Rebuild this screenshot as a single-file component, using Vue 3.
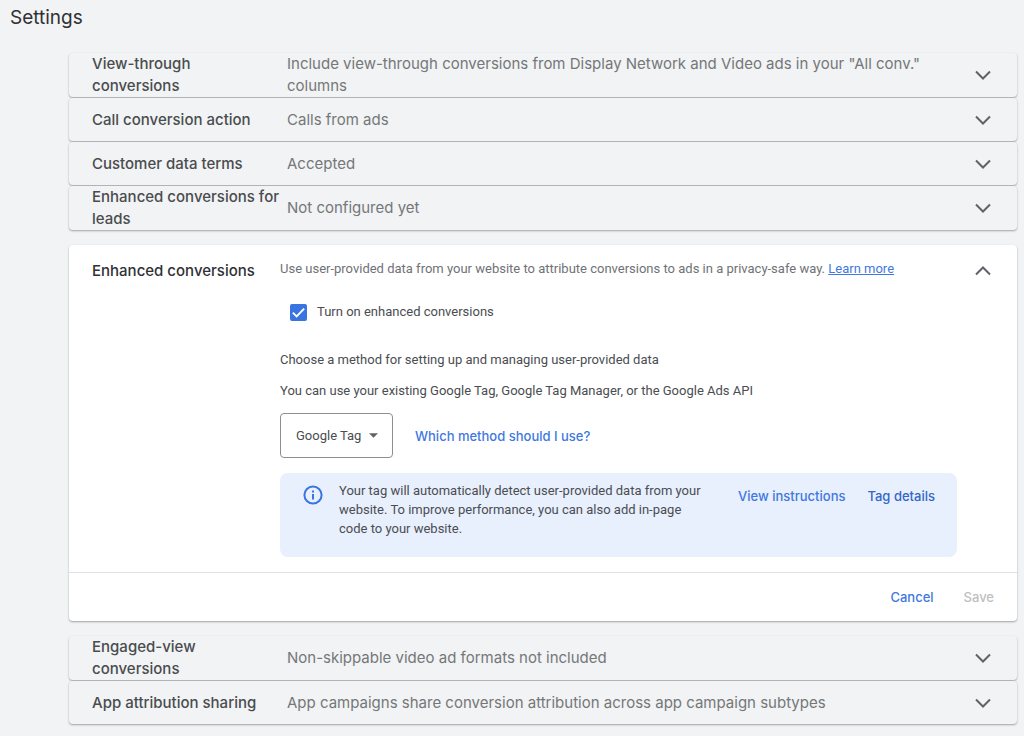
<script setup>
import { ref } from 'vue'

const before = [
  { label: 'View-through conversions', value: 'Include view-through conversions from Display Network and Video ads in your "All conv." columns' },
  { label: 'Call conversion action', value: 'Calls from ads' },
  { label: 'Customer data terms', value: 'Accepted' },
  { label: 'Enhanced conversions for leads', value: 'Not configured yet' },
]
const after = [
  { label: 'Engaged-view conversions', value: 'Non-skippable video ad formats not included' },
  { label: 'App attribution sharing', value: 'App campaigns share conversion attribution across app campaign subtypes' },
]
const enabled = ref(true)
const method = ref('Google Tag')
</script>

<template>
  <main class="page">
    <h1 class="title">Settings</h1>
    <div class="panels">
      <div class="group">
        <button v-for="row in before" :key="row.label" type="button" class="row" aria-expanded="false">
          <span class="label">{{ row.label }}</span>
          <span class="value">{{ row.value }}</span>
          <svg class="chevron" viewBox="0 0 24 24" aria-hidden="true"><path d="M5 8.5l7 7 7-7" /></svg>
        </button>
      </div>

      <section class="card">
        <div class="card-main">
          <h2 class="card-title">Enhanced conversions</h2>
          <div class="content">
            <p class="intro">
              Use user-provided data from your website to attribute conversions to ads in a privacy-safe way.
              <a href="#learn-more">Learn more</a>
            </p>
            <label class="check">
              <span class="box">
                <input v-model="enabled" type="checkbox" />
                <svg v-if="enabled" viewBox="0 0 18 18" aria-hidden="true"><path d="M3 9.2l4 4 8-8.4" /></svg>
              </span>
              Turn on enhanced conversions
            </label>
            <p class="choose">Choose a method for setting up and managing user-provided data</p>
            <p class="existing">You can use your existing Google Tag, Google Tag Manager, or the Google Ads API</p>
            <div class="method">
              <span class="select">
                <select v-model="method" aria-label="Setup method">
                  <option>Google Tag</option>
                </select>
                <svg viewBox="0 0 10 5" aria-hidden="true"><path d="M0 0h10L5 5z" /></svg>
              </span>
              <a class="action" href="#method">Which method should I use?</a>
            </div>
            <div class="notice">
              <svg class="info" viewBox="0 0 20 20" aria-hidden="true">
                <circle cx="10" cy="10" r="8.6" />
                <path d="M10 9v5.4M10 5.6v2" />
              </svg>
              <p>Your tag will automatically detect user-provided data from your website. To improve performance, you can also add in-page code to your website.</p>
              <div class="notice-actions">
                <a class="action" href="#instructions">View instructions</a>
                <a class="action dark" href="#details">Tag details</a>
              </div>
            </div>
          </div>
          <button type="button" class="collapse" aria-label="Collapse" aria-expanded="true">
            <svg class="chevron" viewBox="0 0 24 24" aria-hidden="true"><path d="M5 15.5l7-7 7 7" /></svg>
          </button>
        </div>
        <footer class="footer">
          <button type="button" class="action">Cancel</button>
          <button type="button" class="action" disabled>Save</button>
        </footer>
      </section>

      <div class="group">
        <button v-for="row in after" :key="row.label" type="button" class="row" aria-expanded="false">
          <span class="label">{{ row.label }}</span>
          <span class="value">{{ row.value }}</span>
          <svg class="chevron" viewBox="0 0 24 24" aria-hidden="true"><path d="M5 8.5l7 7 7-7" /></svg>
        </button>
      </div>
    </div>
  </main>
</template>

<style>
body {
  margin: 0;
  background: #f1f3f4;
}
</style>

<style scoped>
.page {
  --display: Inter, "Open Sans", sans-serif;
  font-family: Roboto, sans-serif;
  font-size: 13px;
  color: #4a4d51;
  padding: 4px 7px 10px 10px;
}
h1, h2, p {
  margin: 0;
  font-weight: 400;
}
button {
  border: 0;
  background: none;
  padding: 0;
  cursor: pointer;
}
.title {
  font-family: var(--display);
  font-size: 19px;
  line-height: 28px;
  color: #303134;
}
.panels {
  display: flex;
  flex-direction: column;
  gap: 15px;
  margin: 21px 0 0 59px;
}
.group {
  display: flex;
  flex-direction: column;
  gap: 1px;
}
.row {
  display: grid;
  grid-template-columns: 189px minmax(0, 1fr) 24px;
  column-gap: 6px;
  align-items: center;
  min-height: 43px;
  padding: 0 22px 0 23px;
  border-radius: 4px;
  background: #f1f3f4;
  box-shadow: 0 1px 2px rgba(60, 64, 67, 0.45);
  font-family: var(--display);
  font-size: 15px;
  line-height: 22px;
  text-align: left;
}
.label {
  font-weight: 500;
  color: #4a4c4f;
}
.value {
  color: #757779;
  padding-right: 24px;
}
.chevron {
  display: block;
  width: 24px;
  height: 24px;
  fill: none;
  stroke: #5f6368;
  stroke-width: 2;
}
.card {
  border-radius: 4px;
  background: #fff;
  box-shadow: 0 1px 2px rgba(60, 64, 67, 0.45);
}
.card-main {
  display: grid;
  grid-template-columns: 188px minmax(0, 1fr) 24px;
  align-items: start;
  padding: 14px 22px 15px 23px;
}
.card-title {
  font-family: var(--display);
  font-size: 15px;
  font-weight: 500;
  line-height: 24px;
  color: #303134;
}
.content {
  padding-right: 14px;
}
.intro {
  line-height: 20px;
  color: #6f7276;
}
a {
  color: #3f78e0;
}
.check {
  display: flex;
  align-items: center;
  gap: 10px;
  margin: 22px 0 0 10px;
  line-height: 22px;
}
.box {
  display: grid;
  width: 17px;
  height: 17px;
}
.box input, .box svg {
  grid-area: 1 / 1;
  width: 17px;
  height: 17px;
  margin: 0;
}
.box input {
  appearance: none;
  border: 2px solid #5f6368;
  border-radius: 2px;
}
.box input:checked {
  border-color: #3974e0;
  background: #3974e0;
}
.box svg {
  fill: none;
  stroke: #fff;
  stroke-width: 2;
  pointer-events: none;
}
.choose {
  margin-top: 27px;
  line-height: 20px;
}
.existing {
  margin-top: 11px;
  line-height: 20px;
}
.method {
  display: flex;
  align-items: center;
  gap: 22px;
  margin-top: 12px;
}
.select {
  display: grid;
  align-items: center;
}
.select select, .select svg {
  grid-area: 1 / 1;
}
.select select {
  appearance: none;
  height: 45px;
  padding: 0 30px 0 15px;
  border: 1px solid #8b8e92;
  border-radius: 4px;
  background: #fff;
  font: inherit;
  color: inherit;
}
.select svg {
  justify-self: end;
  width: 9px;
  height: 5px;
  margin-right: 15px;
  fill: #5f6368;
  pointer-events: none;
}
.action {
  font-family: var(--display);
  font-size: 13px;
  font-weight: 500;
  line-height: 20px;
  color: #3f78e0;
  text-decoration: none;
  white-space: nowrap;
}
.action.dark {
  color: #3367c8;
}
.action:disabled {
  color: #bdbfc1;
}
.notice {
  display: flex;
  align-items: flex-start;
  margin-top: 15px;
  padding: 8px 22px 19px 23px;
  border-radius: 8px;
  background: #e8effd;
}
.info {
  flex: none;
  width: 20px;
  height: 20px;
  margin: 4px 16px 0 0;
  fill: none;
  stroke: #3974e0;
  stroke-width: 2;
}
.notice p {
  flex: 1;
  line-height: 19px;
  padding-right: 32px;
}
.notice-actions {
  display: flex;
  gap: 22px;
  padding-top: 5px;
}
.footer {
  display: flex;
  justify-content: flex-end;
  gap: 30px;
  padding: 14px 23px;
  border-top: 1px solid #dfe1e3;
}
</style>
